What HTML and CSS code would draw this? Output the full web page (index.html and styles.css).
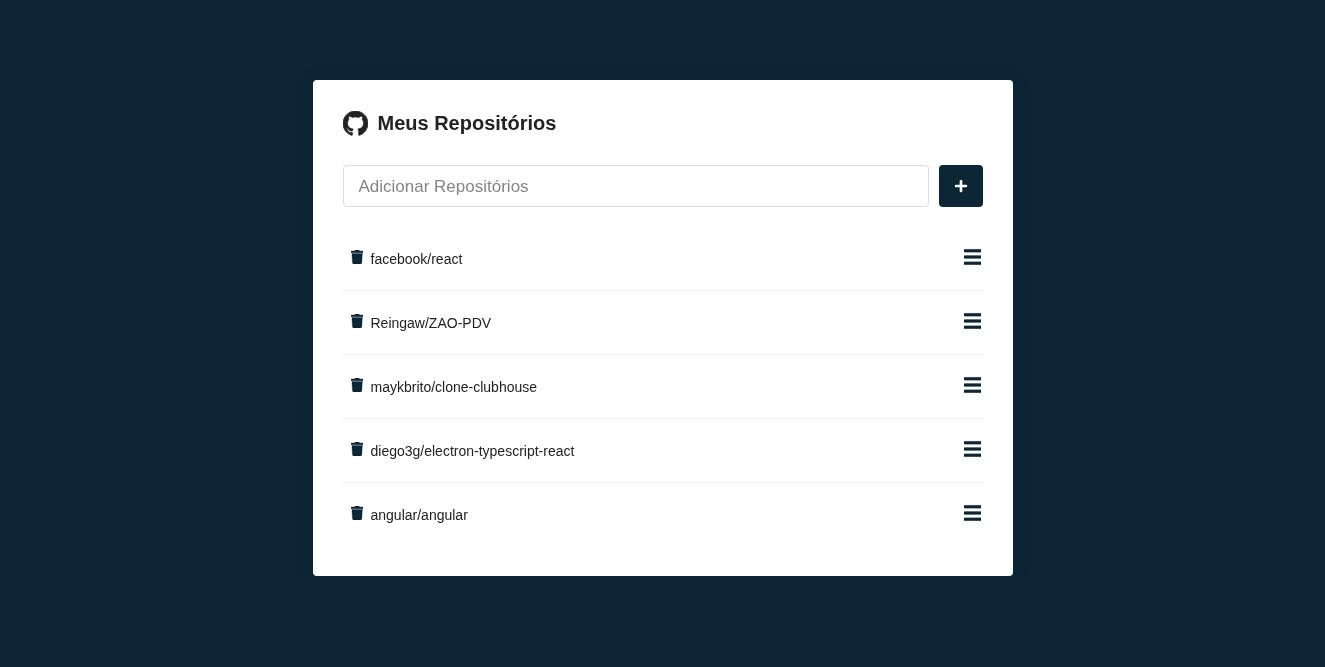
FILE: index.html
```html
<!DOCTYPE html>
<html lang="pt-BR">
<head>
<meta charset="utf-8">
<title>Meus Repositórios</title>
<link rel="stylesheet" href="styles.css">
</head>
<body>
<main class="card">
  <h1 class="title">
    <svg class="icon-github" viewBox="0 0 16 16" fill="currentColor"><path d="M8 0C3.58 0 0 3.58 0 8c0 3.54 2.29 6.53 5.47 7.59.4.07.55-.17.55-.38 0-.19-.01-.82-.01-1.49-2.01.37-2.53-.49-2.69-.94-.09-.23-.48-.94-.82-1.13-.28-.15-.68-.52-.01-.53.63-.01 1.08.58 1.23.82.72 1.21 1.87.87 2.33.66.07-.52.28-.87.51-1.07-1.78-.2-3.64-.89-3.64-3.95 0-.87.31-1.59.82-2.15-.08-.2-.36-1.02.08-2.12 0 0 .67-.21 2.2.82.64-.18 1.32-.27 2-.27.68 0 1.36.09 2 .27 1.53-1.04 2.2-.82 2.2-.82.44 1.1.16 1.92.08 2.12.51.56.82 1.27.82 2.15 0 3.07-1.87 3.75-3.65 3.95.29.25.54.73.54 1.48 0 1.07-.01 1.93-.01 2.2 0 .21.15.46.55.38A8.013 8.013 0 0016 8c0-4.42-3.58-8-8-8z"/></svg>
    Meus Repositórios
  </h1>
  <form class="add-form">
    <input class="add-input" type="text" placeholder="Adicionar Repositórios">
    <button class="add-button" type="button" aria-label="Adicionar">
      <svg class="icon-plus" viewBox="0 0 448 512" fill="currentColor"><path d="M416 208H272V64c0-17.67-14.33-32-32-32h-32c-17.67 0-32 14.33-32 32v144H32c-17.67 0-32 14.33-32 32v32c0 17.67 14.33 32 32 32h144v144c0 17.67 14.33 32 32 32h32c17.67 0 32-14.33 32-32V304h144c17.67 0 32-14.33 32-32v-32c0-17.67-14.33-32-32-32z"/></svg>
    </button>
  </form>
  <ul class="repo-list">
    <li class="repo-item">
      <span class="repo-name"><button class="trash" type="button" aria-label="Excluir"><svg class="icon-trash" viewBox="0 0 448 512" fill="currentColor"><path d="M432 32H312l-9.4-18.7A24 24 0 0 0 281.1 0H166.8a23.72 23.72 0 0 0-21.4 13.3L136 32H16A16 16 0 0 0 0 48v32a16 16 0 0 0 16 16h416a16 16 0 0 0 16-16V48a16 16 0 0 0-16-16zM53.2 467a48 48 0 0 0 47.9 45h245.8a48 48 0 0 0 47.9-45L416 128H32z"/></svg></button>facebook/react</span>
      <a class="details" href="#" aria-label="Detalhes"><svg class="icon-bars" viewBox="0 0 448 512" fill="currentColor"><path d="M16 132h416c8.837 0 16-7.163 16-16V76c0-8.837-7.163-16-16-16H16C7.163 60 0 67.163 0 76v40c0 8.837 7.163 16 16 16zm0 160h416c8.837 0 16-7.163 16-16v-40c0-8.837-7.163-16-16-16H16c-8.837 0-16 7.163-16 16v40c0 8.837 7.163 16 16 16zm0 160h416c8.837 0 16-7.163 16-16v-40c0-8.837-7.163-16-16-16H16c-8.837 0-16 7.163-16 16v40c0 8.837 7.163 16 16 16z"/></svg></a>
    </li>
    <li class="repo-item">
      <span class="repo-name"><button class="trash" type="button" aria-label="Excluir"><svg class="icon-trash" viewBox="0 0 448 512" fill="currentColor"><path d="M432 32H312l-9.4-18.7A24 24 0 0 0 281.1 0H166.8a23.72 23.72 0 0 0-21.4 13.3L136 32H16A16 16 0 0 0 0 48v32a16 16 0 0 0 16 16h416a16 16 0 0 0 16-16V48a16 16 0 0 0-16-16zM53.2 467a48 48 0 0 0 47.9 45h245.8a48 48 0 0 0 47.9-45L416 128H32z"/></svg></button>Reingaw/ZAO-PDV</span>
      <a class="details" href="#" aria-label="Detalhes"><svg class="icon-bars" viewBox="0 0 448 512" fill="currentColor"><path d="M16 132h416c8.837 0 16-7.163 16-16V76c0-8.837-7.163-16-16-16H16C7.163 60 0 67.163 0 76v40c0 8.837 7.163 16 16 16zm0 160h416c8.837 0 16-7.163 16-16v-40c0-8.837-7.163-16-16-16H16c-8.837 0-16 7.163-16 16v40c0 8.837 7.163 16 16 16zm0 160h416c8.837 0 16-7.163 16-16v-40c0-8.837-7.163-16-16-16H16c-8.837 0-16 7.163-16 16v40c0 8.837 7.163 16 16 16z"/></svg></a>
    </li>
    <li class="repo-item">
      <span class="repo-name"><button class="trash" type="button" aria-label="Excluir"><svg class="icon-trash" viewBox="0 0 448 512" fill="currentColor"><path d="M432 32H312l-9.4-18.7A24 24 0 0 0 281.1 0H166.8a23.72 23.72 0 0 0-21.4 13.3L136 32H16A16 16 0 0 0 0 48v32a16 16 0 0 0 16 16h416a16 16 0 0 0 16-16V48a16 16 0 0 0-16-16zM53.2 467a48 48 0 0 0 47.9 45h245.8a48 48 0 0 0 47.9-45L416 128H32z"/></svg></button>maykbrito/clone-clubhouse</span>
      <a class="details" href="#" aria-label="Detalhes"><svg class="icon-bars" viewBox="0 0 448 512" fill="currentColor"><path d="M16 132h416c8.837 0 16-7.163 16-16V76c0-8.837-7.163-16-16-16H16C7.163 60 0 67.163 0 76v40c0 8.837 7.163 16 16 16zm0 160h416c8.837 0 16-7.163 16-16v-40c0-8.837-7.163-16-16-16H16c-8.837 0-16 7.163-16 16v40c0 8.837 7.163 16 16 16zm0 160h416c8.837 0 16-7.163 16-16v-40c0-8.837-7.163-16-16-16H16c-8.837 0-16 7.163-16 16v40c0 8.837 7.163 16 16 16z"/></svg></a>
    </li>
    <li class="repo-item">
      <span class="repo-name"><button class="trash" type="button" aria-label="Excluir"><svg class="icon-trash" viewBox="0 0 448 512" fill="currentColor"><path d="M432 32H312l-9.4-18.7A24 24 0 0 0 281.1 0H166.8a23.72 23.72 0 0 0-21.4 13.3L136 32H16A16 16 0 0 0 0 48v32a16 16 0 0 0 16 16h416a16 16 0 0 0 16-16V48a16 16 0 0 0-16-16zM53.2 467a48 48 0 0 0 47.9 45h245.8a48 48 0 0 0 47.9-45L416 128H32z"/></svg></button>diego3g/electron-typescript-react</span>
      <a class="details" href="#" aria-label="Detalhes"><svg class="icon-bars" viewBox="0 0 448 512" fill="currentColor"><path d="M16 132h416c8.837 0 16-7.163 16-16V76c0-8.837-7.163-16-16-16H16C7.163 60 0 67.163 0 76v40c0 8.837 7.163 16 16 16zm0 160h416c8.837 0 16-7.163 16-16v-40c0-8.837-7.163-16-16-16H16c-8.837 0-16 7.163-16 16v40c0 8.837 7.163 16 16 16zm0 160h416c8.837 0 16-7.163 16-16v-40c0-8.837-7.163-16-16-16H16c-8.837 0-16 7.163-16 16v40c0 8.837 7.163 16 16 16z"/></svg></a>
    </li>
    <li class="repo-item">
      <span class="repo-name"><button class="trash" type="button" aria-label="Excluir"><svg class="icon-trash" viewBox="0 0 448 512" fill="currentColor"><path d="M432 32H312l-9.4-18.7A24 24 0 0 0 281.1 0H166.8a23.72 23.72 0 0 0-21.4 13.3L136 32H16A16 16 0 0 0 0 48v32a16 16 0 0 0 16 16h416a16 16 0 0 0 16-16V48a16 16 0 0 0-16-16zM53.2 467a48 48 0 0 0 47.9 45h245.8a48 48 0 0 0 47.9-45L416 128H32z"/></svg></button>angular/angular</span>
      <a class="details" href="#" aria-label="Detalhes"><svg class="icon-bars" viewBox="0 0 448 512" fill="currentColor"><path d="M16 132h416c8.837 0 16-7.163 16-16V76c0-8.837-7.163-16-16-16H16C7.163 60 0 67.163 0 76v40c0 8.837 7.163 16 16 16zm0 160h416c8.837 0 16-7.163 16-16v-40c0-8.837-7.163-16-16-16H16c-8.837 0-16 7.163-16 16v40c0 8.837 7.163 16 16 16zm0 160h416c8.837 0 16-7.163 16-16v-40c0-8.837-7.163-16-16-16H16c-8.837 0-16 7.163-16 16v40c0 8.837 7.163 16 16 16z"/></svg></a>
    </li>
  </ul>
</main>
</body>
</html>
```
FILE: styles.css
```css
* { box-sizing: border-box; margin: 0; padding: 0; }
html, body { min-height: 100%; }
body {
  background: #0d2636;
  font-family: "Liberation Sans", Arial, sans-serif;
  font-size: 14px;
  color: #222;
  padding-top: 80px;
}
.card {
  width: 700px;
  height: 496px;
  margin: 0 auto;
  padding: 30px;
  background: #fff;
  border-radius: 4px;
  box-shadow: 0 0 20px rgba(0, 0, 0, 0.1);
  transform: translateZ(0);
}
.title {
  display: flex;
  align-items: center;
  font-size: 20px;
  font-weight: 700;
  line-height: 26px;
  color: #222;
}
.icon-github {
  width: 25px;
  height: 25px;
  margin-right: 10px;
  stroke: currentColor;
  stroke-width: 0.45;
}
.add-form { display: flex; margin-top: 29px; }
.add-input {
  flex: 1;
  height: 42px;
  padding: 11px 15px 9px;
  border: 1px solid #ddd;
  border-radius: 4px;
  font-family: inherit;
  font-size: 17px;
  outline: none;
}
.add-input::placeholder { color: #858585; }
.add-button {
  display: flex;
  align-items: center;
  justify-content: center;
  width: 44px;
  height: 42px;
  margin-left: 10px;
  border: 0;
  border-radius: 4px;
  background: #0d2636;
  color: #fff;
}
.icon-plus { width: 14px; height: 14px; display: block; }
.repo-list { list-style: none; margin-top: 20px; }
.repo-item {
  display: flex;
  align-items: center;
  justify-content: space-between;
  height: 63px;
}
.repo-item + .repo-item { height: 64px; border-top: 1px solid #eee; }
.repo-name { display: flex; align-items: center; }
.trash {
  display: flex;
  border: 0;
  background: none;
  color: #0d2636;
  padding: 0 7.75px 0 8px;
  margin-top: -3px;
}
.icon-trash {
  width: 12.25px;
  height: 14px;
  display: block;
  stroke: currentColor;
  stroke-width: 12;
}
.details { display: flex; color: #0d2636; margin: -3px 1.2px 0 0; }
.icon-bars {
  width: 17.5px;
  height: 20px;
  display: block;
  stroke: currentColor;
  stroke-width: 6;
}
```
